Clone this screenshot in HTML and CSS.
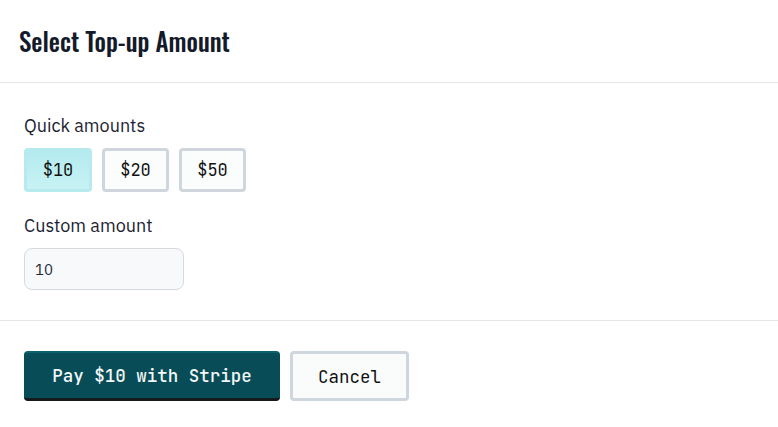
FILE: index.html
```html
<!DOCTYPE html>
<html>
<head>
<meta charset="utf-8">
<link rel="stylesheet" href="styles.css">
</head>
<body>
<div class="dialog">
  <header class="dialog-header">
    <h2 class="title">Select Top-up Amount</h2>
  </header>
  <section class="dialog-body">
    <div class="field">
      <div class="label">Quick amounts</div>
      <div class="quick-row">
        <button class="chip chip-active">$10</button>
        <button class="chip">$20</button>
        <button class="chip">$50</button>
      </div>
    </div>
    <div class="field">
      <div class="label">Custom amount</div>
      <input class="amount-input" type="text" value="10">
    </div>
  </section>
  <footer class="dialog-footer">
    <button class="btn btn-primary">Pay $10 with Stripe</button>
    <button class="btn btn-secondary">Cancel</button>
  </footer>
</div>
</body>
</html>
```
FILE: styles.css
```css
* { box-sizing: border-box; }
html, body { margin: 0; padding: 0; background: #ffffff; }
body { font-family: "IBM Plex Sans", "Noto Sans", Inter, sans-serif; color: #1f2937; }
.dialog { width: 778px; }
.dialog-header {
  height: 83px;
  border-bottom: 1px solid #e5e7eb;
  padding: 24px 19px 0;
}
.title {
  margin: 0;
  font-family: "Oswald", "Liberation Sans Narrow", "DejaVu Sans Condensed", sans-serif;
  font-weight: 500;
  font-size: 25px;
  line-height: 34px;
  color: #131a2a;
}
.dialog-body {
  padding: 32px 24px 30px;
  border-bottom: 1px solid #e5e7eb;
  display: flex;
  flex-direction: column;
  gap: 23px;
}
.label {
  font-size: 18px;
  line-height: 22px;
  color: #1b2333;
  margin-bottom: 11px;
}
.quick-row { display: flex; gap: 10px; }
.chip {
  font-family: "JetBrains Mono", "DejaVu Sans Mono", monospace;
  font-size: 17px;
  height: 44px;
  padding: 0 12px;
  border: 3px solid #cfd6dd;
  border-radius: 4px;
  background: #fbfdfd;
  color: #111;
  min-width: 67px;
}
.chip-active {
  background: linear-gradient(#b3ebef, #c8f2f4);
  border-color: #b6eaee;
  min-width: 68px;
}
.amount-input {
  display: block;
  width: 160px;
  height: 42px;
  border: 1px solid #d6d9de;
  border-radius: 8px;
  background: #f8f9fb;
  padding: 0 10px;
  font-family: "IBM Plex Sans", "Noto Sans", Inter, sans-serif;
  font-size: 15px;
  color: #1f2937;
}
.dialog-footer {
  padding: 30px 24px;
  display: flex;
  gap: 10px;
}
.btn {
  font-family: "JetBrains Mono", "DejaVu Sans Mono", monospace;
  font-size: 17.5px;
  height: 50px;
  border-radius: 4px;
  cursor: pointer;
}
.btn-primary {
  width: 256px;
  background: #074c57;
  color: #f4f8f8;
  border: none;
  border-top: 2px solid #0a6270;
  border-bottom: 3px solid #151b1c;
  font-weight: 500;
}
.btn-secondary {
  width: 119px;
  background: #fafcfc;
  border: 3px solid #cfd6dd;
  color: #111;
}
```
